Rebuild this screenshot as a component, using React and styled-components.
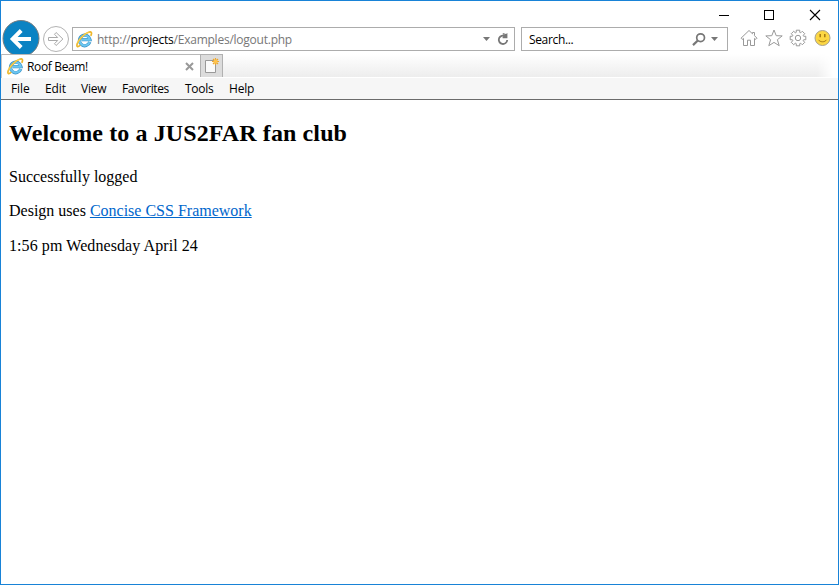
import React from 'react';
import styled, { createGlobalStyle } from 'styled-components';

const Global = createGlobalStyle`
  * { box-sizing: border-box; }
  html, body { margin: 0; padding: 0; background: #fff; }
  svg { display: block; flex: none; }
`;

const Window = styled.div`
  width: 839px;
  height: 585px;
  border: 1px solid #1883d7;
  background: #fff;
  overflow: hidden;
  display: flex;
  flex-direction: column;
  font: 12px/16px "Open Sans", "Noto Sans", sans-serif;
  color: #000;
`;

const TitleBar = styled.div`
  height: 19px;
  flex: none;
  display: flex;
  justify-content: flex-end;
  padding: 8px 17px 0 0;
  gap: 34px;
`;

const NavBar = styled.div`
  height: 34px;
  flex: none;
  display: flex;
  align-items: flex-start;
  overflow: hidden;
  padding-left: 1px;
`;

const NavButton = styled.div`
  width: ${(p) => p.$w}px;
  height: 34px;
  overflow: hidden;
  flex: none;
`;

const Field = styled.div`
  width: ${(p) => p.$w}px;
  height: 24px;
  margin: 7px ${(p) => p.$after}px 0 0;
  flex: none;
  border: 1px solid #acacac;
  display: flex;
  align-items: center;
  padding: 0 5px 0 ${(p) => p.$left}px;
`;

const Text = styled.span`
  display: block;
  white-space: nowrap;
  letter-spacing: ${(p) => p.$ls || 0}px;
  color: ${(p) => p.$color || '#000'};
  padding-top: ${(p) => p.$top}px;
  margin-left: ${(p) => p.$left || 0}px;
`;

const Host = styled.span`
  color: #000;
`;

const Spacer = styled.div`
  flex: 1;
`;

const Gap = styled.div`
  width: ${(p) => p.$w}px;
  flex: none;
`;

const Tools = styled.div`
  display: flex;
  gap: 6.5px;
  padding-top: 9px;
`;

const TabBar = styled.div`
  height: 24px;
  flex: none;
  display: flex;
`;

const Tab = styled.div`
  width: 199px;
  height: 24px;
  border-left: 1px solid #c8c8c8;
  border-top: 1px solid #b8b8b8;
  display: flex;
  align-items: center;
  padding: 0 6px 0 5px;
  gap: 3px;
`;

const NewTab = styled.div`
  width: 23px;
  height: 23px;
  background: #dcdcdc;
  border: 1px solid #b1b1b1;
  border-bottom: 0;
  padding: 2px 0 0 3px;
`;

const TabStrip = styled.div`
  flex: 1;
  height: 23px;
  margin-right: 5px;
  background: linear-gradient(#fff, #ededed);
  -webkit-mask-image: linear-gradient(to right, #000 calc(100% - 16px), transparent);
  mask-image: linear-gradient(to right, #000 calc(100% - 16px), transparent);
`;

const MenuBar = styled.div`
  height: 22px;
  flex: none;
  display: flex;
  gap: 16px;
  padding: 3px 0 0 10px;
  background: #f6f6f6;
  border-bottom: 1px solid #6b6b6b;
`;

const MenuItem = styled.div`
  width: ${(p) => p.$w}px;
  white-space: nowrap;
  letter-spacing: ${(p) => p.$ls}px;
`;

const Page = styled.main`
  padding: 20px 8px 0;
  font: 16px/18px "Liberation Serif", "Times New Roman", serif;
`;

const Heading = styled.h2`
  margin: 0 0 21px;
  font-size: 24px;
  line-height: 27px;
  letter-spacing: 0.11px;
`;

const Paragraph = styled.p`
  margin: 0 0 ${(p) => p.$after || 16}px;
  letter-spacing: ${(p) => p.$ls || 0}px;
`;

const Link = styled.a`
  color: #0066cc;
  text-decoration: underline;
`;

const IELogo = () => (
  <svg width="17" height="17" viewBox="0 0 17 17" fill="none">
    <path d="M13.8 11.1A5.3 5.3 0 1 1 14 8.6H5.6" stroke="#3b93c8" strokeWidth="3.2" />
    <path d="M13.6 11.1A5.1 5.1 0 1 1 13.8 8.6H5.6" stroke="#6cc6f0" strokeWidth="2.1" />
    <path d="M4.2 14.2C1.6 16.6.2 15.7 1.3 12.5 2.7 8.3 8.4 2.6 12.6 1.2c3-1 3.6.7 2.2 3.6" stroke="#edb62a" strokeWidth="1.7" />
    <path d="M1.5 12.3C3.1 8 8.2 2.9 12.7 1.4" stroke="#ffdc5c" strokeWidth=".8" />
  </svg>
);

const BackIcon = () => (
  <svg width="38" height="38" viewBox="0 0 38 38" fill="none">
    <circle cx="19" cy="18.5" r="18" fill="#0b83c3" stroke="#777d80" />
    <path d="M29 19H11.5M19.2 10.5L10.7 19l8.5 8.5" stroke="#fff" strokeWidth="4" />
  </svg>
);

const ForwardIcon = () => (
  <svg width="32" height="34" viewBox="0 0 32 34" fill="none">
    <circle cx="16" cy="19" r="12.5" stroke="#b3b3b3" />
    <path d="M8.5 17.5h9.2l-3.2-3.2 1.6-1.8 6.8 6.5-6.8 6.5-1.6-1.8 3.2-3.2H8.5z" stroke="#aaa" />
  </svg>
);

const Caret = () => (
  <svg width="7" height="4" viewBox="0 0 7 4"><path d="M0 0h7L3.5 4z" fill="#777" /></svg>
);

const Refresh = () => (
  <svg width="12" height="14" viewBox="0 0 12 14" fill="none">
    <path d="M8.2 4.2A4.2 4.2 0 1 0 10.2 8" stroke="#777" strokeWidth="1.8" />
    <path d="M5.8 1v1.8h2L5.6 5v1.2h4.8V1L9 2.1z" fill="#777" />
  </svg>
);

const Magnifier = () => (
  <svg width="14" height="14" viewBox="0 0 14 14" fill="none">
    <circle cx="8.6" cy="5.7" r="3.9" stroke="#777" strokeWidth="1.7" />
    <path d="M5.8 8.5L1 13.1" stroke="#777" strokeWidth="2.2" />
  </svg>
);

const Home = () => (
  <svg width="18" height="18" viewBox="0 0 18 18" fill="none" stroke="#999">
    <path d="M9 1.5L1 9.2l1.2 1.2 1.3-1v7.1h4v-5.3h3v5.3h4V9.4l1.3 1L17 9.2l-2.5-2.5V3.5h-2v1.3z" />
  </svg>
);

const Star = () => (
  <svg width="18" height="18" viewBox="0 0 18 18" fill="none" stroke="#999">
    <path d="M9 1l2.2 5.7 6 .2-4.8 3.8 1.8 6L9 13.4l-5.2 3.3 1.8-6L.8 6.9l6-.2z" />
  </svg>
);

const gearPath = Array.from({ length: 8 }, (_, i) =>
  [[-0.3, 5.9], [-0.22, 8], [0.22, 8], [0.3, 5.9]].map(([da, r]) => {
    const a = (i * Math.PI) / 4 + da;
    return `${(9 + r * Math.sin(a)).toFixed(2)} ${(9 - r * Math.cos(a)).toFixed(2)}`;
  }).join('L')
).join('L');

const Gear = () => (
  <svg width="18" height="18" viewBox="0 0 18 18" fill="none" stroke="#999">
    <path d={`M${gearPath}Z`} strokeLinejoin="round" />
    <circle cx="9" cy="9" r="2.7" />
  </svg>
);

const Smile = () => (
  <svg width="17" height="18" viewBox="0 0 17 18" fill="none">
    <circle cx="8.5" cy="9" r="7.5" fill="#fcd744" stroke="#a8a291" />
    <path d="M6.2 5v3.3M10.8 5v3.3" stroke="#a47813" strokeWidth="1.5" />
    <path d="M4.5 10.8c1.5 2.6 6.5 2.6 8 0" stroke="#a47813" />
  </svg>
);

const menus = [
  ['File', 18, -0.1], ['Edit', 20, -0.1], ['View', 25, -0.2],
  ['Favorites', 47, -0.45], ['Tools', 28, -0.3], ['Help', 25, -0.2],
];

export default function App() {
  return (
    <>
      <Global />
      <Window>
        <TitleBar>
          <svg width="12" height="12" shapeRendering="crispEdges"><path d="M2 6.5h10" stroke="#000" /></svg>
          <svg width="12" height="12" shapeRendering="crispEdges"><path d="M1.5 1.5h9v9h-9z" fill="none" stroke="#000" /></svg>
          <svg width="12" height="12"><path d="M1 1l10 10M11 1L1 11" stroke="#000" strokeWidth="1.1" /></svg>
        </TitleBar>
        <NavBar>
          <NavButton $w={38}><BackIcon /></NavButton>
          <NavButton $w={32}><ForwardIcon /></NavButton>
          <Field $w={443} $after={6} $left={3}>
            <IELogo />
            <Text $color="#777" $ls={-0.24} $top={2} $left={4}>
              http://<Host>projects</Host>/Examples/logout.php
            </Text>
            <Spacer />
            <Caret />
            <Gap $w={7} />
            <Refresh />
          </Field>
          <Field $w={207} $after={12} $left={7}>
            <Text $ls={-0.35} $top={2}>Search...</Text>
            <Spacer />
            <Magnifier />
            <Gap $w={5} />
            <Caret />
            <Gap $w={4} />
          </Field>
          <Tools><Home /><Star /><Gear /><Smile /></Tools>
        </NavBar>
        <TabBar>
          <Tab>
            <IELogo />
            <Text $ls={-0.35} $top={1}>Roof Beam!</Text>
            <Spacer />
            <svg width="9" height="9"><path d="M1 1l7 7M8 1L1 8" stroke="#999" strokeWidth="2" /></svg>
          </Tab>
          <NewTab>
            <svg width="18" height="19" fill="none">
              <path d="M1.5 3.5h10v12h-10z" fill="#fafafa" stroke="#999" />
              <path d="M11.5 1v7M8 4.5h7M9 2l5 5M14 2L9 7" stroke="#eda62a" strokeWidth="1.2" />
              <circle cx="11.5" cy="4.5" r="1.9" fill="#ffc34b" />
            </svg>
          </NewTab>
          <TabStrip />
        </TabBar>
        <MenuBar>
          {menus.map(([label, w, ls]) => <MenuItem key={label} $w={w} $ls={ls}>{label}</MenuItem>)}
        </MenuBar>
        <Page>
          <Heading>Welcome to a JUS2FAR fan club</Heading>
          <Paragraph>Successfully logged</Paragraph>
          <Paragraph $after={17}>Design uses <Link>Concise CSS Framework</Link></Paragraph>
          <Paragraph $ls={0.08}>1:56 pm Wednesday April 24</Paragraph>
        </Page>
      </Window>
    </>
  );
}
